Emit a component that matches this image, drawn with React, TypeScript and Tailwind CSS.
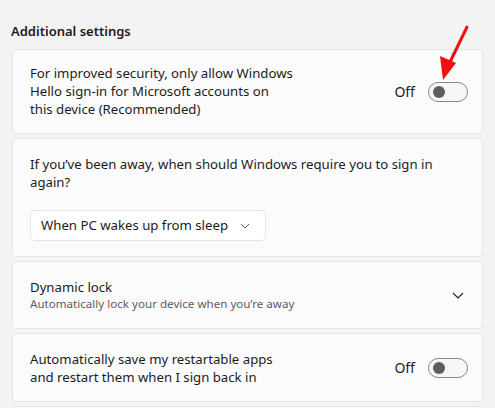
import React from "react";

function Toggle() {
  return (
    <div className="flex items-center gap-[13px]">
      <span className="text-[14px] text-[#1b1b1b]">Off</span>
      <div className="w-[40px] h-[20px] rounded-full border border-[#868686] bg-[#f6f6f6] flex items-center pl-[4px]">
        <div className="w-[12px] h-[12px] rounded-full bg-[#5d5d5d]" />
      </div>
    </div>
  );
}

export default function App() {
  return (
    <div
      className="relative w-[495px] h-[408px] overflow-hidden bg-[#f3f3f3] text-[#1b1b1b]"
      style={{ fontFamily: '"Segoe UI", "Noto Sans", "Open Sans", sans-serif' }}
    >
      <div className="pl-[12px] pr-[12px] pt-[21px] flex flex-col">
        <div className="text-[13px] font-semibold h-[24px] leading-[20px] ml-[-1px]">Additional settings</div>
        <div className="mt-[4px] h-[85px] bg-[#fbfbfb] border border-[#e5e5e5] rounded-[4px] flex items-center justify-between pl-[17px] pr-[14px]">
          <div className="text-[13.2px] leading-[18px] mt-[-2px]">
            For improved security, only allow Windows
            <br />
            Hello sign-in for Microsoft accounts on
            <br />
            this device (Recommended)
          </div>
          <Toggle />
        </div>
        <div className="mt-[4px] h-[119px] bg-[#fbfbfb] border border-[#e5e5e5] rounded-[4px] pl-[17px] pt-[16px]">
          <div className="text-[13.2px] leading-[18px]">
            If you’ve been away, when should Windows require you to sign in
            <br />
            again?
          </div>
          <div className="mt-[19px] w-[236px] h-[31px] bg-white border border-[#e5e5e5] rounded-[4px] flex items-center pl-[10px] pr-[15px] justify-between">
            <span className="text-[13.2px]">When PC wakes up from sleep</span>
            <svg width="10" height="6" viewBox="0 0 10 6" fill="none">
              <path d="M1 1l4 4 4-4" stroke="#5d5d5d" strokeWidth="1" />
            </svg>
          </div>
        </div>
        <div className="mt-[4px] h-[68px] bg-[#fbfbfb] border border-[#e5e5e5] rounded-[4px] flex items-center justify-between pl-[17px] pr-[18px]">
          <div className="flex flex-col">
            <span className="text-[13.2px] leading-[18px]">Dynamic lock</span>
            <span className="text-[11.6px] leading-[16px] text-[#5d5d5d]">Automatically lock your device when you’re away</span>
          </div>
          <svg width="12" height="7" viewBox="0 0 12 7" fill="none">
            <path d="M1 1l5 5 5-5" stroke="#1b1b1b" strokeWidth="1.1" />
          </svg>
        </div>
        <div className="mt-[4px] h-[69px] bg-[#fbfbfb] border border-[#e5e5e5] rounded-[4px] flex items-center justify-between pl-[17px] pr-[14px]">
          <div className="text-[13.2px] leading-[18px]">
            Automatically save my restartable apps
            <br />
            and restart them when I sign back in
          </div>
          <Toggle />
        </div>
        <div className="mt-[4px] h-[40px] bg-[#fbfbfb] border border-[#e5e5e5] rounded-[4px]" />
      </div>
      <svg className="absolute left-0 top-0 pointer-events-none" width="495" height="408">
        <line x1="467" y1="27" x2="450" y2="62" stroke="#ee1111" strokeWidth="3" strokeLinecap="round" />
        <polygon points="443,80 440,56 456,63" fill="#ee1111" />
      </svg>
    </div>
  );
}
